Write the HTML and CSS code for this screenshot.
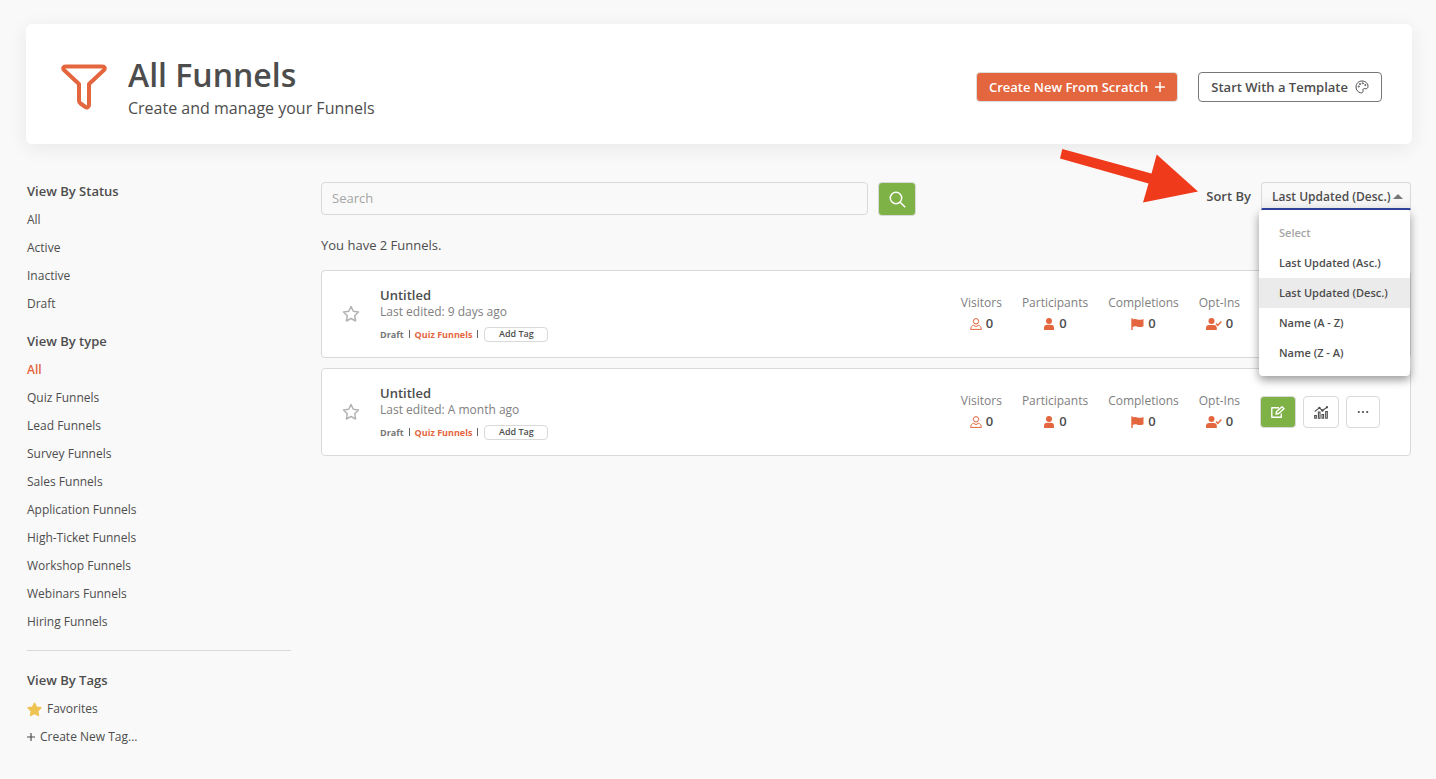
FILE: index.html
```html
<!DOCTYPE html>
<html lang="en">
<head>
    <meta charset="UTF-8">
    <meta name="viewport" content="width=device-width, initial-scale=1.0">
    <title>All Funnels</title>
    <link rel="stylesheet" href="styles.css">
</head>
<body>
    <!-- Shared icons -->
    <svg class="sprite" aria-hidden="true">
        <symbol id="star" viewBox="0 0 18 18">
            <path d="M9 1.500l2.300 4.800 5.200.7-3.800 3.700.9 5.300L9 13.500 4.400 16l.9-5.300L1.500 7l5.200-.7z" stroke-linejoin="round"/>
        </symbol>
        <symbol id="plus" viewBox="0 0 10 10">
            <path d="M5 .5v9M.5 5h9" fill="none" stroke="currentColor" stroke-width="1.500" stroke-linecap="round"/>
        </symbol>
        <symbol id="user-outline" viewBox="0 0 12 12">
            <circle cx="6" cy="3.300" r="2.700"/>
            <path d="M3.600 7.300C1.700 7.700.7 9 .7 11.400h10.600c0-2.400-1-3.700-2.900-4.100L6 8.600z"/>
        </symbol>
        <symbol id="user" viewBox="0 0 12 12">
            <circle cx="6" cy="3" r="3"/>
            <path d="M1 12V10a3.200 3.200 0 0 1 3.200-3.200h3.600A3.200 3.200 0 0 1 11 10v2z"/>
        </symbol>
        <symbol id="flag" viewBox="0 0 13 12">
            <path d="M.3.6C.3 0 1.700 0 1.700.6v.8c2-.8 3.400-.5 4.800 0 1.800.6 3.500.5 6-.5v7.300c-2.300 1.100-4.300 1-6.200.5-1.600-.5-3-.5-4.600.2V12H.3z"/>
        </symbol>
        <symbol id="user-check" viewBox="0 0 16 12">
            <circle cx="5.500" cy="3" r="3"/>
            <path d="M0 12v-1.800a3.300 3.300 0 0 1 3.300-3.300h4.200a3.300 3.300 0 0 1 3.300 3.300V12z"/>
            <path d="M10 5.500l1.800 1.900 3.500-3.900" fill="none" stroke="currentColor" stroke-width="1.500"/>
        </symbol>
        <symbol id="edit" viewBox="0 0 14 12">
            <path d="M8 1.700H.8v9.600h9.500V7.500M5 8l.6-2.500L11 .8l2 1.900L7.600 7.500z" fill="none" stroke="currentColor" stroke-width="1.400" stroke-linejoin="round"/>
        </symbol>
        <symbol id="stats" viewBox="0 0 14 13">
            <path d="M.7 5.500l4.700-3.600 3 2.600 4.700-3.300M.7 9.500h1.600v2.800H.7zM4.400 6h1.600v6.300H4.400zM8 8.500h1.600v3.800H8zM11.700 5.500h1.600v6.800h-1.600z" fill="none" stroke="currentColor" stroke-width="1.100"/>
            <circle cx="5.400" cy="1.900" r="1.200"/><circle cx="8.400" cy="4.500" r="1.200"/><circle cx="13" cy="1.200" r="1.100"/>
        </symbol>
        <symbol id="dots" viewBox="0 0 12 4">
            <circle cx="1.800" cy="2" r="1.100"/><circle cx="6" cy="2" r="1.100"/><circle cx="10.200" cy="2" r="1.100"/>
        </symbol>
    </svg>

    <header class="page-header">
        <svg class="funnel-icon" viewBox="0 0 46 46" aria-hidden="true">
            <path d="M4.500 2.500h37c2 0 3 2 1.500 3.500L28 20v21c0 2-2 3-3.500 2L19.500 39.500c-1-.8-1.500-1.500-1.500-3V20L3 6C1.500 4.500 2.500 2.500 4.500 2.500z" fill="none" stroke="currentColor" stroke-width="4" stroke-linejoin="round"/>
        </svg>
        <div class="page-title">
            <h1>All Funnels</h1>
            <p>Create and manage your Funnels</p>
        </div>
        <div class="header-actions">
            <button type="button" class="btn btn-primary">Create New From Scratch
                <svg width="10" height="10" aria-hidden="true"><use href="#plus"/></svg>
            </button>
            <button type="button" class="btn btn-outline">Start With a Template
                <svg width="14" height="14" viewBox="0 0 14 14" fill="none" stroke="currentColor" aria-hidden="true">
                    <path d="M5.500 12.800C2.800 12 1 9.800 1 7c0-3.500 2.700-6 6-6s6 2.300 6 5.200c0 2-1.200 2.700-2.700 2.500-1.700-.3-2.700.3-2.300 1.700.4 1.500-.7 2.900-2.500 2.400z"/>
                    <circle cx="3.800" cy="6.500" r=".6"/><circle cx="5" cy="4" r=".6"/><circle cx="7.800" cy="3.300" r=".6"/><circle cx="10.300" cy="5" r=".6"/>
                </svg>
            </button>
        </div>
    </header>

    <div class="layout">
        <aside class="sidebar">
            <h2>View By Status</h2>
            <ul>
                <li><a href="#">All</a></li>
                <li><a href="#">Active</a></li>
                <li><a href="#">Inactive</a></li>
                <li><a href="#">Draft</a></li>
            </ul>
            <h2>View By type</h2>
            <ul>
                <li><a href="#" class="active">All</a></li>
                <li><a href="#">Quiz Funnels</a></li>
                <li><a href="#">Lead Funnels</a></li>
                <li><a href="#">Survey Funnels</a></li>
                <li><a href="#">Sales Funnels</a></li>
                <li><a href="#">Application Funnels</a></li>
                <li><a href="#">High-Ticket Funnels</a></li>
                <li><a href="#">Workshop Funnels</a></li>
                <li><a href="#">Webinars Funnels</a></li>
                <li><a href="#">Hiring Funnels</a></li>
            </ul>
            <hr>
            <h2>View By Tags</h2>
            <ul>
                <li><a href="#"><svg class="favorite" width="15" height="15" aria-hidden="true"><use href="#star"/></svg>Favorites</a></li>
                <li><a href="#"><svg class="add" width="8" height="8" aria-hidden="true"><use href="#plus"/></svg>Create New Tag...</a></li>
            </ul>
        </aside>

        <main>
            <div class="toolbar">
                <form class="search">
                    <input type="text" placeholder="Search" aria-label="Search">
                    <button type="submit" aria-label="Search funnels">
                        <svg width="17" height="17" viewBox="0 0 17 17" fill="none" stroke="currentColor" stroke-width="1.500" aria-hidden="true">
                            <circle cx="7" cy="7" r="5.700"/><path d="M11.200 11.200l5 5"/>
                        </svg>
                    </button>
                </form>
                <div class="sort">
                    <svg class="arrow" width="138" height="54" viewBox="0 0 138 54" aria-hidden="true">
                        <path d="M2.300 0L91.500 24.500 96.700 5.500 138 42.500 83 53.500 88.500 34.500 0 9.500z"/>
                    </svg>
                    <label for="sortBy">Sort By</label>
                    <div class="select-box">
                        <select id="sortBy">
                            <option>Last Updated (Asc.)</option>
                            <option selected>Last Updated (Desc.)</option>
                            <option>Name (A - Z)</option>
                            <option>Name (Z - A)</option>
                        </select>
                        <div class="sort-menu">
                            <button type="button" disabled>Select</button>
                            <button type="button">Last Updated (Asc.)</button>
                            <button type="button" class="selected">Last Updated (Desc.)</button>
                            <button type="button">Name (A - Z)</button>
                            <button type="button">Name (Z - A)</button>
                        </div>
                    </div>
                </div>
            </div>

            <p class="count">You have 2 Funnels.</p>

            <article class="funnel">
                <button type="button" class="star" aria-label="Favorite"><svg width="18" height="18"><use href="#star"/></svg></button>
                <div class="funnel-info">
                    <h3>Untitled</h3>
                    <p>Last edited: 9 days ago</p>
                    <div class="tags"><span>Draft</span><i></i><a href="#">Quiz Funnels</a><i></i><button type="button">Add Tag</button></div>
                </div>
                <dl class="stats">
                    <div><dt>Visitors</dt><dd><svg class="line" width="12" height="12"><use href="#user-outline"/></svg>0</dd></div>
                    <div><dt>Participants</dt><dd><svg width="12" height="12"><use href="#user"/></svg>0</dd></div>
                    <div><dt>Completions</dt><dd><svg width="13" height="12"><use href="#flag"/></svg>0</dd></div>
                    <div><dt>Opt-Ins</dt><dd><svg width="16" height="12"><use href="#user-check"/></svg>0</dd></div>
                </dl>
                <div class="actions">
                    <button type="button" class="edit" aria-label="Edit"><svg width="14" height="12"><use href="#edit"/></svg></button>
                    <button type="button" aria-label="Statistics"><svg width="14" height="13"><use href="#stats"/></svg></button>
                    <button type="button" aria-label="More"><svg width="12" height="4"><use href="#dots"/></svg></button>
                </div>
            </article>

            <article class="funnel">
                <button type="button" class="star" aria-label="Favorite"><svg width="18" height="18"><use href="#star"/></svg></button>
                <div class="funnel-info">
                    <h3>Untitled</h3>
                    <p>Last edited: A month ago</p>
                    <div class="tags"><span>Draft</span><i></i><a href="#">Quiz Funnels</a><i></i><button type="button">Add Tag</button></div>
                </div>
                <dl class="stats">
                    <div><dt>Visitors</dt><dd><svg class="line" width="12" height="12"><use href="#user-outline"/></svg>0</dd></div>
                    <div><dt>Participants</dt><dd><svg width="12" height="12"><use href="#user"/></svg>0</dd></div>
                    <div><dt>Completions</dt><dd><svg width="13" height="12"><use href="#flag"/></svg>0</dd></div>
                    <div><dt>Opt-Ins</dt><dd><svg width="16" height="12"><use href="#user-check"/></svg>0</dd></div>
                </dl>
                <div class="actions">
                    <button type="button" class="edit" aria-label="Edit"><svg width="14" height="12"><use href="#edit"/></svg></button>
                    <button type="button" aria-label="Statistics"><svg width="14" height="13"><use href="#stats"/></svg></button>
                    <button type="button" aria-label="More"><svg width="12" height="4"><use href="#dots"/></svg></button>
                </div>
            </article>
        </main>
    </div>
</body>
</html>
```
FILE: styles.css
```css
* {
    box-sizing: border-box;
}
body {
    margin: 0;
    padding: 24px 24px 24px 26px;
    background-color: #f9f9f9;
    color: #4d4d4d;
    font-family: "Open Sans", sans-serif;
    font-size: 12px;
}
h1, h2, h3, p, ul, dl, dd {
    margin: 0;
    padding: 0;
}
ul {
    list-style: none;
}
a {
    color: inherit;
    text-decoration: none;
}
button, input, select {
    font-family: inherit;
    color: inherit;
}
button {
    padding: 0;
    cursor: pointer;
}
svg {
    fill: currentColor;
    flex-shrink: 0;
}
svg[fill="none"] {
    fill: none;
}
.sprite {
    position: absolute;
    width: 0;
    height: 0;
}

/* Header */
.page-header {
    display: flex;
    align-items: center;
    min-height: 120px;
    padding: 6px 30px 0 35px;
    background-color: #fff;
    border-radius: 6px;
    box-shadow: 0 4px 20px rgba(0, 0, 0, 0.07);
}
.funnel-icon {
    width: 46px;
    height: 46px;
    color: #e4663e;
}
.page-title {
    flex: 1;
    margin-left: 21px;
    padding-top: 2px;
}
.page-title h1 {
    font-size: 32px;
    font-weight: 600;
    line-height: 40px;
}
.page-title p {
    font-size: 16px;
    line-height: 26px;
}
.header-actions {
    display: flex;
    gap: 20px;
}
.btn {
    display: flex;
    align-items: center;
    gap: 7px;
    height: 30px;
    padding: 0 12px;
    border-radius: 4px;
    font-size: 13px;
    font-weight: 600;
}
.btn-primary {
    background-color: #e4663e;
    border: 1px solid #ddd;
    color: #fff;
}
.btn-outline {
    background-color: #fff;
    border: 1px solid #777;
}

/* Sidebar */
.layout {
    display: flex;
    gap: 30px;
    padding: 33px 1px 0;
}
.sidebar {
    width: 264px;
    flex-shrink: 0;
}
.sidebar h2 {
    font-size: 13px;
    font-weight: 600;
    line-height: 28px;
}
.sidebar ul {
    padding-top: 1px;
}
.sidebar ul + h2 {
    margin-top: 9px;
}
.sidebar a {
    display: flex;
    align-items: center;
    line-height: 28px;
}
.sidebar a.active {
    color: #e4663e;
    font-weight: 600;
}
.sidebar hr {
    margin: 14px 0 15px;
    border: 0;
    border-top: 1px solid #d9d9d9;
}
.favorite {
    margin-right: 5px;
    color: #efc352;
    stroke: currentColor;
    stroke-width: 2px;
}
.add {
    margin-right: 5px;
}

/* Search and sort */
main {
    flex: 1;
    min-width: 0;
    padding-top: 5px;
}
.toolbar {
    display: flex;
    justify-content: space-between;
}
.search {
    display: flex;
    gap: 10px;
    flex-basis: 595px;
}
.search input {
    flex: 1;
    min-width: 0;
    height: 33px;
    padding: 0 10px 2px;
    background-color: #f9f9f9;
    border: 1px solid #d9d9d9;
    border-radius: 4px;
    font-size: 13px;
}
.search input::placeholder {
    color: #a5a5a5;
}
.search button {
    display: flex;
    align-items: center;
    justify-content: center;
    width: 38px;
    height: 34px;
    background-color: #7eb146;
    border: 1px solid #d9d9d9;
    border-radius: 4px;
    color: #fff;
}
.sort {
    position: relative;
    display: flex;
    gap: 10px;
    font-size: 13px;
    font-weight: 600;
}
.sort label {
    line-height: 28px;
}
.arrow {
    position: absolute;
    top: -33px;
    right: calc(100% + 8px);
    color: #f03a1c;
}
.select-box {
    position: relative;
    width: 150px;
    height: 28px;
}
.select-box::after {
    content: "";
    position: absolute;
    top: 12px;
    right: 8px;
    border: 5px solid transparent;
    border-top: 0;
    border-bottom-color: #777;
}
.sort select {
    appearance: none;
    width: 100%;
    height: 28px;
    padding: 2px 0 0 10px;
    background: linear-gradient(#f9f9f9 50%, #efefef);
    border: 1px solid #d9d9d9;
    border-bottom: 2px solid #3346a0;
    border-radius: 4px 4px 0 0;
    font-size: 12px;
    font-weight: 600;
}
.sort-menu {
    position: absolute;
    z-index: 1;
    top: 28px;
    right: 1px;
    width: 151px;
    padding: 8px 0;
    background-color: #fff;
    border-radius: 4px;
    box-shadow: 0 4px 10px rgba(0, 0, 0, 0.4);
}
.sort-menu button {
    display: block;
    width: 100%;
    height: 30px;
    padding: 0 20px 2px;
    background: none;
    border: 0;
    font-size: 11px;
    font-weight: 600;
    text-align: left;
    white-space: nowrap;
}
.sort-menu button:disabled {
    color: #a5a5a5;
}
.sort-menu .selected {
    background-color: #ebebeb;
}

/* Funnel list */
.count {
    margin: 19px 0 15px;
    font-size: 13px;
    line-height: 20px;
}
.funnel {
    display: flex;
    align-items: center;
    min-height: 88px;
    margin-bottom: 10px;
    padding: 0 30px 0 20px;
    background-color: #fff;
    border: 1px solid #d9d9d9;
    border-radius: 4px;
}
.star {
    display: flex;
    background: none;
    border: 0;
}
.star svg {
    fill: none;
    stroke: #b3b3b3;
    stroke-width: 1.5px;
}
.funnel-info {
    flex: 1;
    margin-left: 20px;
}
.funnel-info h3 {
    font-size: 13px;
    font-weight: 600;
    line-height: 16px;
}
.funnel-info p {
    color: #808080;
    line-height: 18px;
}
.tags {
    display: flex;
    align-items: center;
    gap: 5px;
    margin-top: 6px;
    font-size: 9px;
    font-weight: 700;
    color: #777;
}
.tags a {
    color: #e4663e;
}
.tags i {
    width: 1px;
    height: 8px;
    background-color: #666;
}
.tags button {
    width: 64px;
    height: 15px;
    margin-left: 1px;
    background-color: #fff;
    border: 1px solid #d9d9d9;
    border-radius: 4px;
    color: #4d4d4d;
    font-size: 9px;
    font-weight: 600;
    line-height: 12px;
}
.stats {
    display: flex;
    gap: 20px;
    padding-bottom: 2px;
    text-align: center;
}
.stats dt {
    color: #808080;
    line-height: 21px;
}
.stats dd {
    display: flex;
    align-items: center;
    justify-content: center;
    gap: 4px;
    font-size: 13px;
    font-weight: 600;
    line-height: 21px;
}
.stats svg {
    color: #e4663e;
}
.stats .line {
    fill: none;
    stroke: currentColor;
}
.actions {
    display: flex;
    gap: 7px;
    margin-left: 20px;
}
.actions button {
    display: flex;
    align-items: center;
    justify-content: center;
    width: 36px;
    height: 32px;
    background-color: #fff;
    border: 1px solid #d9d9d9;
    border-radius: 4px;
}
.actions button:last-child {
    width: 34px;
}
.actions .edit {
    background-color: #7eb146;
    color: #fff;
}
```
